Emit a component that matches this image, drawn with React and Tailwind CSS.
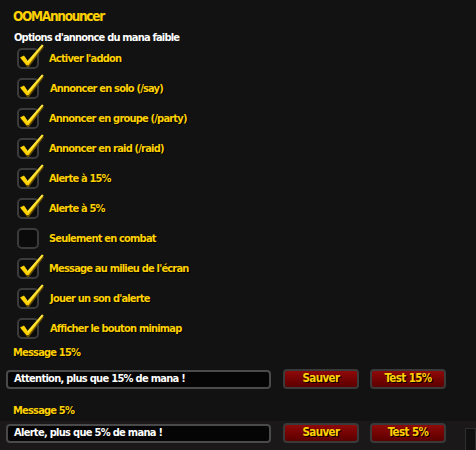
import React from "react";

const font = { fontFamily: '"DejaVu Sans Condensed", "DejaVu Sans", sans-serif' };

const options = [
  { label: "Activer l'addon", checked: true, dx: 0 },
  { label: "Annoncer en solo (/say)", checked: true, dx: 1 },
  { label: "Annoncer en groupe (/party)", checked: true, dx: 0 },
  { label: "Annoncer en raid (/raid)", checked: true, dx: 0 },
  { label: "Alerte à 15%", checked: true, dx: 0 },
  { label: "Alerte à 5%", checked: true, dx: 0 },
  { label: "Seulement en combat", checked: false, dx: 0 },
  { label: "Message au milieu de l'écran", checked: true, dx: 0 },
  { label: "Jouer un son d'alerte", checked: true, dx: 1 },
  { label: "Afficher le bouton minimap", checked: true, dx: 1 },
];

function Check() {
  return (
    <svg className="absolute left-[1px] top-[-5px]" width="28" height="28" viewBox="0 0 28 28">
      <path d="M3 16 L7 14 L10 19 L24 3 L26 4 L11 24 L9 24 Z" fill="#6b5200" />
      <path d="M2 14.5 L6 12.5 L9.5 18 L24 1.5 L25.5 2.5 L10.5 22 L8.5 22 Z" fill="#ffd200" />
      <path d="M6 12.5 L9.5 18 L24 1.5 L25.5 2.5 L10 20 Z" fill="#fff36a" opacity="0.6" />
    </svg>
  );
}

function CheckRow({ label, checked, dx }) {
  return (
    <div className="flex h-[30px] items-center pl-[17px]">
      <div className="relative h-[21px] w-[22px] shrink-0">
        <div className="h-[21px] w-[22px] rounded-[5px] border-2 border-[#3b3b3b] bg-[#0b0b0b]" />
        {checked && <Check />}
      </div>
      <span
        className="text-[11px] font-bold leading-none tracking-[-0.8px] text-[#ffd100] [text-shadow:1px_1px_0_#000]"
        style={{ marginLeft: 10 + dx }}
      >
        {label}
      </span>
    </div>
  );
}

function WowButton({ children }) {
  return (
    <div className="flex h-[20px] w-[76px] items-center justify-center rounded-[4px] border-2 border-[#3a3a3a] bg-gradient-to-b from-[#8f0a0a] to-[#5c0000] text-[11.5px] font-bold tracking-[-0.6px] text-[#ffd100] [text-shadow:1px_1px_0_#000]">
      {children}
    </div>
  );
}

function InputRow({ value, test }) {
  return (
    <div className="flex items-center">
      <div className="ml-[6px] flex h-[19px] w-[265px] items-center rounded-[4px] border-2 border-[#4a4a4a] bg-[#050505] pl-[6px] text-[11px] font-bold tracking-[-0.7px] text-white">
        {value}
      </div>
      <div className="ml-[12px]">
        <WowButton>Sauver</WowButton>
      </div>
      <div className="ml-[11px]">
        <WowButton>{test}</WowButton>
      </div>
    </div>
  );
}

export default function App() {
  return (
    <div className="relative h-[450px] w-[476px] overflow-hidden bg-[#121212]" style={font}>
      <div className="pl-[13px] pt-[8px] text-[13.5px] font-bold leading-[16px] tracking-[-1.3px] text-[#ffd100]">
        OOMAnnouncer
      </div>
      <div className="mt-[7px] pl-[14px] text-[11px] font-bold leading-[14px] tracking-[-0.8px] text-white">
        Options d'annonce du mana faible
      </div>
      <div className="mt-[-2px]">
        {options.map((o) => (
          <CheckRow key={o.label} {...o} />
        ))}
      </div>
      <div className="mt-[3px] pl-[13px] text-[11px] font-bold leading-[14px] tracking-[-0.8px] text-[#ffd100] [text-shadow:1px_1px_0_#000]">
        Message 15%
      </div>
      <div className="mt-[9px]">
        <InputRow value="Attention, plus que 15% de mana !" test="Test 15%" />
      </div>
      <div className="mt-[15px] pl-[13px] text-[11px] font-bold leading-[14px] tracking-[-0.8px] text-[#ffd100] [text-shadow:1px_1px_0_#000]">
        Message 5%
      </div>
      <div className="mt-[3px] flex h-[40px] items-start bg-[#1a1818] pt-[2px]">
        <InputRow value="Alerte, plus que 5% de mana !" test="Test 5%" />
        <div className="ml-[19px] mt-[5px] h-[30px] w-[20px] border border-[#2e2e2e] bg-[#101010]" />
      </div>
    </div>
  );
}
